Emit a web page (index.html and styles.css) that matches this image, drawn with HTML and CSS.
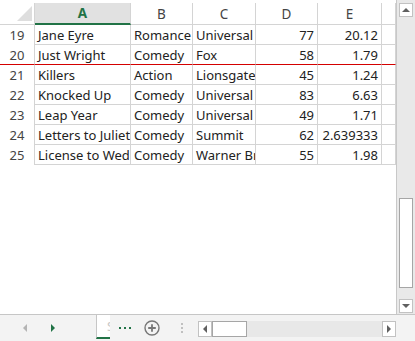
FILE: index.html
```html
<!DOCTYPE html>
<html lang="en">
<head>
    <meta charset="UTF-8">
    <meta name="viewport" content="width=device-width, initial-scale=1.0">
    <title>Sheet</title>
    <link rel="stylesheet" href="styles.css">
</head>
<body>
    <div class="app">
        <div class="main">
            <div class="sheet">
                <div class="row head">
                    <div class="corner">
                        <svg width="15" height="15" viewBox="0 0 15 15"><path d="M15 0 L15 15 L0 15 Z" fill="#dedede"/></svg>
                    </div>
                    <div class="col active">A</div>
                    <div class="col">B</div>
                    <div class="col">C</div>
                    <div class="col">D</div>
                    <div class="col">E</div>
                    <div class="col"></div>
                </div>
                <div class="row">
                    <div class="num">19</div><div class="cell">Jane Eyre</div><div class="cell">Romance</div><div class="cell">Universal</div><div class="cell n">77</div><div class="cell n">20.12</div><div class="cell"></div>
                </div>
                <div class="row freeze">
                    <div class="num">20</div><div class="cell">Just Wright</div><div class="cell">Comedy</div><div class="cell">Fox</div><div class="cell n">58</div><div class="cell n">1.79</div><div class="cell"></div>
                </div>
                <div class="row">
                    <div class="num">21</div><div class="cell">Killers</div><div class="cell">Action</div><div class="cell">Lionsgate</div><div class="cell n">45</div><div class="cell n">1.24</div><div class="cell"></div>
                </div>
                <div class="row">
                    <div class="num">22</div><div class="cell">Knocked Up</div><div class="cell">Comedy</div><div class="cell">Universal</div><div class="cell n">83</div><div class="cell n">6.63</div><div class="cell"></div>
                </div>
                <div class="row">
                    <div class="num">23</div><div class="cell">Leap Year</div><div class="cell">Comedy</div><div class="cell">Universal</div><div class="cell n">49</div><div class="cell n">1.71</div><div class="cell"></div>
                </div>
                <div class="row">
                    <div class="num">24</div><div class="cell">Letters to Juliet</div><div class="cell">Comedy</div><div class="cell">Summit</div><div class="cell n">62</div><div class="cell n">2.639333</div><div class="cell"></div>
                </div>
                <div class="row">
                    <div class="num">25</div><div class="cell">License to Wed</div><div class="cell">Comedy</div><div class="cell">Warner Bros</div><div class="cell n">55</div><div class="cell n">1.98</div><div class="cell"></div>
                </div>
                <div class="blank"></div>
            </div>
            <div class="vscroll">
                <div class="sbtn"><span class="tri up"></span></div>
                <div class="vthumb"></div>
                <div class="sbtn down"><span class="tri dn"></span></div>
            </div>
        </div>
        <div class="bottom">
            <div class="nav">
                <span class="navbtn"><span class="tri lt off"></span></span>
                <span class="navbtn"><span class="tri rt on"></span></span>
            </div>
            <div class="tab"><span>Sheet1</span></div>
            <div class="more">
                <svg width="12" height="4" viewBox="0 0 12 4"><rect x="0" y="1" width="2" height="2" fill="#217346"/><rect x="5" y="1" width="2" height="2" fill="#217346"/><rect x="10" y="1" width="2" height="2" fill="#217346"/></svg>
            </div>
            <div class="add">
                <svg width="16" height="16" viewBox="0 0 16 16"><circle cx="8" cy="8" r="7" fill="none" stroke="#777" stroke-width="1.4"/><path d="M8 4.2 V11.8 M4.2 8 H11.8" stroke="#777" stroke-width="1.8"/></svg>
            </div>
            <div class="sep"></div>
            <div class="hscroll">
                <div class="sbtn"><span class="tri lt"></span></div>
                <div class="hthumb"></div>
                <div class="sbtn right"><span class="tri rt"></span></div>
            </div>
        </div>
    </div>
</body>
</html>
```

FILE: styles.css
```css
body {
    margin: 0;
    padding: 0;
    background: #fff;
    font-family: "Noto Sans", "Open Sans", sans-serif;
    font-size: 13px;
    color: #222;
    overflow: hidden;
}
.app {
    width: 415px;
    height: 341px;
    display: flex;
    flex-direction: column;
}
.main {
    height: 314px;
    display: flex;
}
.sheet {
    flex: 1;
    display: flex;
    flex-direction: column;
    overflow: hidden;
}
.row {
    display: grid;
    grid-template-columns: 35px 96px 62px 63px 62px 64px 14px;
    height: 20px;
}
.row > div {
    box-sizing: border-box;
    overflow: hidden;
    white-space: nowrap;
    display: flex;
    align-items: center;
}
.row.head {
    height: 22px;
    padding-top: 3px;
}
.corner {
    justify-content: flex-end;
    align-items: flex-end !important;
    padding: 0 2px 3px 0;
    border-right: 1px solid #d4d4d4;
    border-bottom: 1px solid #d4d4d4;
}
.col {
    justify-content: center;
    color: #444;
    font-size: 13.5px;
    border-right: 1px solid #d4d4d4;
    border-bottom: 1px solid #d4d4d4;
}
.col.active {
    background: #e1e1e1;
    color: #217346;
    font-weight: bold;
    border-bottom: 2px solid #217346;
}
.num {
    justify-content: center;
    color: #444;
    border-right: 1px solid #d4d4d4;
}
.cell {
    padding: 0 3px;
    border-right: 1px solid #d4d4d4;
    border-bottom: 1px solid #d4d4d4;
}
.cell.n {
    justify-content: flex-end;
}
.row.freeze > div {
    border-bottom: 1px solid #d40000;
}
.blank {
    flex: 1;
}
.vscroll {
    width: 19px;
    box-sizing: border-box;
    border-left: 1px solid #c8c8c8;
    background: #e9e9e9;
    padding: 3px 1px 1px 2px;
    display: flex;
    flex-direction: column;
}
.sbtn {
    width: 14px;
    height: 14px;
    box-sizing: border-box;
    background: #fff;
    border: 1px solid #c2c2c2;
    display: flex;
    align-items: center;
    justify-content: center;
}
.sbtn.down {
    margin-top: auto;
}
.vthumb {
    margin-top: 181px;
    height: 90px;
    width: 14px;
    box-sizing: border-box;
    background: #fff;
    border: 1px solid #a6a6a6;
}
.tri {
    width: 0;
    height: 0;
    display: block;
}
.tri.up {
    border-left: 4px solid transparent;
    border-right: 4px solid transparent;
    border-bottom: 4px solid #606060;
}
.tri.dn {
    border-left: 4px solid transparent;
    border-right: 4px solid transparent;
    border-top: 4px solid #606060;
}
.tri.lt {
    border-top: 4px solid transparent;
    border-bottom: 4px solid transparent;
    border-right: 4px solid #606060;
}
.tri.rt {
    border-top: 4px solid transparent;
    border-bottom: 4px solid transparent;
    border-left: 4px solid #606060;
}
.tri.off {
    border-right-color: #b4b4b4;
}
.tri.on {
    border-left-color: #217346;
}
.bottom {
    height: 27px;
    box-sizing: border-box;
    border-top: 1px solid #c6c6c6;
    background: #f3f3f3;
    display: flex;
}
.nav {
    width: 96px;
    padding-left: 11px;
    box-sizing: border-box;
    display: flex;
}
.navbtn {
    width: 28px;
    display: flex;
    align-items: center;
    justify-content: center;
}
.tab {
    width: 14px;
    height: 24px;
    box-sizing: border-box;
    background: #fff;
    border-left: 1px solid #c6c6c6;
    border-bottom: 2px solid #217346;
    overflow: hidden;
    padding-left: 10px;
    display: flex;
    align-items: center;
    color: #c8c8c8;
    white-space: nowrap;
}
.more {
    width: 30px;
    display: flex;
    align-items: center;
    justify-content: center;
}
.add {
    width: 24px;
    display: flex;
    align-items: center;
    justify-content: center;
}
.sep {
    width: 1px;
    margin: 8px 14px 0 17px;
    height: 10px;
    border-left: 2px dotted #c0c0c0;
}
.hscroll {
    width: 198px;
    height: 16px;
    margin-top: 6px;
    background: #e8e8e8;
    display: flex;
}
.hscroll .sbtn {
    height: 16px;
}
.hscroll .sbtn.right {
    margin-left: auto;
}
.hthumb {
    width: 35px;
    height: 16px;
    box-sizing: border-box;
    background: #fff;
    border: 1px solid #a6a6a6;
}
```
